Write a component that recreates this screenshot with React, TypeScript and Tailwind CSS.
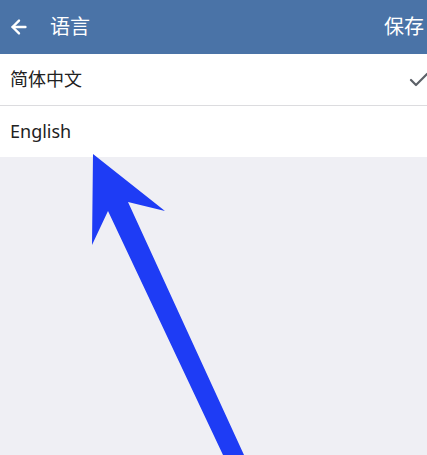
import { ArrowLeft, Check } from 'lucide-react'

const FONT = { fontFamily: '"Noto Sans", "Noto Sans CJK SC", sans-serif' }

export default function App() {
  return (
    <div className="relative w-[427px] h-[455px] overflow-hidden bg-[#efeff4]" style={FONT}>
      {/* Top bar */}
      <div className="flex items-center h-[54px] bg-[#4a73a7] text-white">
        <ArrowLeft className="ml-[8px] w-[22px] h-[22px]" strokeWidth={2.6} />
        <span className="ml-[20px] text-[20px] leading-none">语言</span>
        <span className="ml-auto mr-[3px] text-[20px] leading-none">保存</span>
      </div>

      {/* Language list */}
      <div className="bg-white">
        <div className="flex items-center h-[52px] pl-[10px] border-b border-[#dcdcdf]">
          <span className="text-[18px] text-[#222]">简体中文</span>
          <Check className="ml-auto mr-[-4px] w-[24px] h-[24px] text-[#5c6168]" strokeWidth={2.2} />
        </div>
        <div className="flex items-center h-[51px] pl-[10px]">
          <span className="text-[18px] text-[#222]">English</span>
        </div>
      </div>

      {/* Annotation arrow */}
      <svg className="absolute inset-0 pointer-events-none" width="427" height="455" viewBox="0 0 427 455">
        <polygon
          points="93,154 165,211 128,202 244,455 223,455 108,211 92,245"
          fill="#1e3cf5"
        />
      </svg>
    </div>
  )
}
